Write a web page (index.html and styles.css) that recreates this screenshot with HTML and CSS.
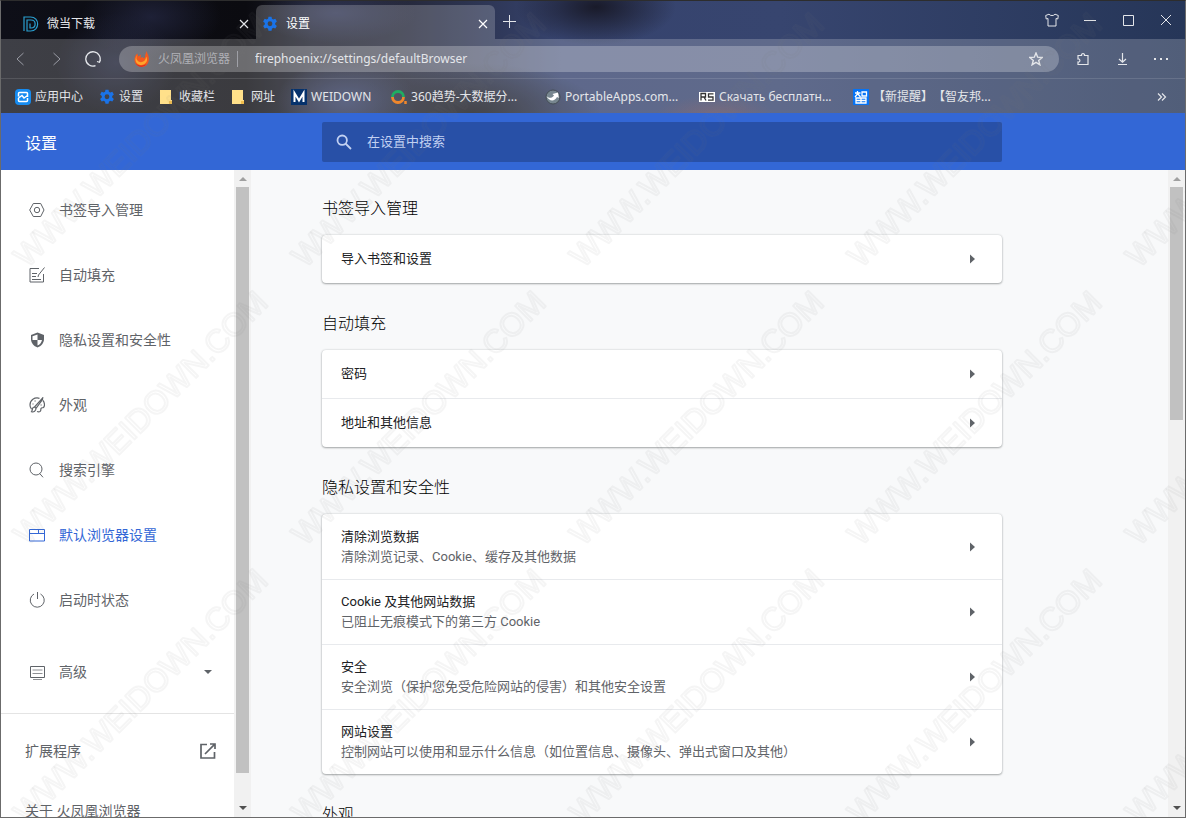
FILE: index.html
```
<!DOCTYPE html>
<html lang="zh-CN">
<head>
<meta charset="utf-8">
<meta name="viewport" content="width=device-width, initial-scale=1">
<title>设置</title>
<link rel="stylesheet" href="styles.css">
</head>
<body>
<svg class="defs" aria-hidden="true">
  <symbol id="gear" viewBox="0 0 24 24"><path fill-rule="evenodd" d="M9.7 1h4.6l.6 3.2 2 1.2 3.1-1.1 2.3 4-2.5 2.1v2.4l2.5 2.1-2.3 4-3.1-1.1-2 1.2-.6 3.2H9.700l-.6-3.200-2-1.200L4 18.900l-2.300-4 2.500-2.100v-2.400L1.700 8.300l2.300-4 3.100 1.100 2-1.200zM12 8a3.600 3.600 0 1 0 0 7.200A3.600 3.600 0 0 0 12 8z"/></symbol>
  <symbol id="cross" viewBox="0 0 12 12"><path d="M2 2l8 8m0-8l-8 8" fill="none" stroke="currentColor" stroke-width="1.200"/></symbol>
  <symbol id="folder" viewBox="0 0 16 16"><path d="M1 1h11v10h1v4H1z" fill="#ffe08a"/><path d="M10 12h3v3h-3z" fill="#f0bd4e"/></symbol>
  <symbol id="arrow" viewBox="0 0 6 10"><path d="M0 .5L5 5 0 9.500z"/></symbol>
</svg>
<div class="window">
  <header class="chrome">
    <div class="tabs">
      <div class="tab">
        <svg class="i16" viewBox="0 0 16 16" fill="none" stroke="#2a9fd0" stroke-width="1.200"><path d="M1 15V1h6.500c9.500 0 9.500 14 0 14H4V4h4c5.500 0 5.500 8 0 8H7V7.500"/></svg>
        <span class="tab-title">微当下载</span>
        <button class="icon-btn" aria-label="关闭标签页"><svg class="i12"><use href="#cross"/></svg></button>
      </div>
      <div class="tab tab-active">
        <svg class="i16 blue"><use href="#gear"/></svg>
        <span class="tab-title">设置</span>
        <button class="icon-btn" aria-label="关闭标签页"><svg class="i12"><use href="#cross"/></svg></button>
      </div>
      <button class="icon-btn new-tab" aria-label="新标签页"><svg class="i14" viewBox="0 0 14 14"><path d="M7.500 1v13M1 7.500h13" stroke="currentColor"/></svg></button>
      <div class="win-controls">
        <button class="icon-btn" aria-label="皮肤"><svg class="i14" viewBox="0 0 14 14" fill="none" stroke="currentColor"><path d="M.7 2.500L4 1.200c1 1.800 5 1.800 6 0l3.300 1.300-.5 3.500-1.800-.5v7.500H3V5.500L1.200 6z"/></svg></button>
        <button class="icon-btn" aria-label="最小化"><svg class="i12" viewBox="0 0 12 12"><path d="M0 6.500h12" stroke="currentColor"/></svg></button>
        <button class="icon-btn" aria-label="最大化"><svg class="i12" viewBox="0 0 12 12"><path d="M1.500 1.500h10v10h-10z" fill="none" stroke="currentColor"/></svg></button>
        <button class="icon-btn" aria-label="关闭"><svg class="i12" viewBox="0 0 12 12"><path d="M1 1l10 10m0-10L1 11" stroke="currentColor"/></svg></button>
      </div>
    </div>
    <div class="toolbar">
      <div class="nav-buttons">
        <button class="icon-btn dim" aria-label="后退"><svg class="i16" viewBox="0 0 16 16" fill="none" stroke="currentColor"><path d="M10.500 2L4 8l6.500 6"/></svg></button>
        <button class="icon-btn dim" aria-label="前进"><svg class="i16" viewBox="0 0 16 16" fill="none" stroke="currentColor"><path d="M4.500 2L11 8l-6.500 6"/></svg></button>
        <button class="icon-btn" aria-label="刷新"><svg class="i16" viewBox="0 0 16 16" fill="none" stroke="currentColor" stroke-width="1.300"><path d="M10.500 14.700A7.200 7.200 0 1 1 14.600 10.800M15.500 8.800l-1 2.500-2.500-.8"/></svg></button>
      </div>
      <div class="address">
        <svg class="i16" viewBox="0 0 16 16"><path d="M13 0c-.5 2 1.500 3.500 1.800 6.500C15.500 12 12 16 8 16c-4.500 0-7.500-3.300-7.500-7.500C.5 6 1.500 3.500 3.500 2.500c0 1.500.5 2.500 1 3L7 3.500 6.500 7l2-1L10 7.500c1.800-1.500.5-4 3-7.500z" fill="#f4581e"/><path d="M3.500 4C2 6 2 8 3.500 9.500 5.500 12 9 11.500 11 9c.7-1 1-2 1-3.500 2 3 1 6-1.500 7.500C6.500 15.500 1.500 13 1.500 8.500 1.500 6.500 2.300 5 3.500 4z" fill="#ffa52b"/><path d="M1.500 12c2.500 3 7 3.800 11 1-2.500 3.500-8.500 4-11-1z" fill="#d7261e"/></svg>
        <label class="site" for="url">火凤凰浏览器</label>
        <input class="url" id="url" type="text" value="firephoenix://settings/defaultBrowser">
        <button class="icon-btn" aria-label="收藏"><svg class="i14" viewBox="0 0 14 14" fill="none" stroke="currentColor" stroke-width="1.400"><path d="M7 1l1.700 4.200 4.500.3-3.500 2.900 1.200 4.400L7 10.400l-3.900 2.400 1.200-4.400L.8 5.500l4.500-.3z"/></svg></button>
      </div>
      <div class="tools">
        <button class="icon-btn" aria-label="扩展"><svg class="i14" viewBox="0 0 14 14" fill="none" stroke="currentColor" stroke-width="1.200"><path d="M2 3.500h3.500c-.8-2.500 3.800-2.500 3 0h3.500v9H2V10c2.500.5 2.500-3.500 0-3z"/></svg></button>
        <button class="icon-btn" aria-label="下载"><svg class="i14" viewBox="0 0 14 14" fill="none" stroke="currentColor" stroke-width="1.200"><path d="M7.500 1v9M4 7l3.500 3.200L11 7M3 12.500h9"/></svg></button>
        <button class="icon-btn" aria-label="菜单"><svg class="i16" viewBox="0 0 16 16" fill="currentColor"><path d="M1 7h2v2H1zM7 7h2v2H7zM13 7h2v2h-2z"/></svg></button>
      </div>
    </div>
    <nav class="bookmarks" aria-label="书签栏">
      <a href="#"><svg class="i16" viewBox="0 0 16 16"><rect width="16" height="16" rx="4" fill="#168bf0"/><path d="M3.500 7.500V4.500q0-1 1-1h7q1 0 1 1V8M3.500 9v2.500q0 1 1 1h7q1 0 1-1V9M3.500 9L7 6.500l2 2.500 3.500-2.500" fill="none" stroke="#fff" stroke-width="1.500"/></svg>应用中心</a>
      <a href="#"><svg class="i16 blue"><use href="#gear"/></svg>设置</a>
      <a href="#"><svg class="i16"><use href="#folder"/></svg>收藏栏</a>
      <a href="#"><svg class="i16"><use href="#folder"/></svg>网址</a>
      <a class="mid" href="#"><svg class="i16" viewBox="0 0 16 16"><path d="M0 0h16v16H0z" fill="#06326c"/><path d="M3.500 13V4L8 11.500 12.500 4v9" fill="none" stroke="#fff" stroke-width="2"/></svg>WEIDOWN</a>
      <a class="wide" href="#"><svg class="i16" viewBox="0 0 16 16" fill="none" stroke-width="2.800"><path d="M1.500 8a5.500 5.500 0 0 1 11 0" stroke="#1fae62"/><path d="M1.500 8a5.500 5.500 0 0 0 11 0" stroke="#f0872c"/><path d="M14.500 12v3" stroke="#f0872c" stroke-width="2.500"/></svg>360趋势-大数据分...</a>
      <a class="wide" href="#"><svg class="i16" viewBox="0 0 16 16"><circle cx="8" cy="8" r="7" fill="#77868f" stroke="#444d55"/><path d="M1.500 7c2 2.500 5.500 2.500 7.500-.5L7.500 5 13 3.500l.8 5.500L12 8c-2.500 5-8 4.500-10.500-1z" fill="#fff"/></svg>PortableApps.com...</a>
      <a class="wide" href="#"><svg class="i16" viewBox="0 0 16 16"><path d="M0 3h16v10H0z" fill="#fff"/><path d="M2 11.500v-7h4.500V8H2.500M5 8l2 3.500M14.500 4.800H9.500V8H14v3.200H9" fill="none" stroke="#333" stroke-width="1.300"/></svg>Скачать бесплатн...</a>
      <a class="wide" href="#"><svg class="i16" viewBox="0 0 16 16"><path d="M0 0h16v16H0z" fill="#0673f5"/><path d="M2 4h5.500M4.500 2v3L2 8M5 5l2.500 3M9 3h4.500v4H9zM3 9h10v5H3zM3 11.500h10M8 9v5" fill="none" stroke="#fff" stroke-width="1.300"/></svg>【新提醒】【智友邦...</a>
      <button class="icon-btn more" aria-label="更多书签"><svg class="i12" viewBox="0 0 12 12" fill="none" stroke="currentColor" stroke-width="1.200"><path d="M2 2.500L5.500 6 2 9.500M6 2.500L9.500 6 6 9.500"/></svg></button>
    </nav>
  </header>

  <div class="app-bar">
    <h1>设置</h1>
    <label class="search">
      <svg class="i16" viewBox="0 0 16 16" fill="none" stroke="currentColor" stroke-width="1.800"><circle cx="6.200" cy="6.200" r="4.700"/><path d="M9.500 9.500l5.500 5.500"/></svg>
      <input type="search" placeholder="在设置中搜索" aria-label="在设置中搜索">
    </label>
  </div>

  <div class="body">
    <nav class="sidebar" aria-label="设置">
      <a href="#"><svg class="i16" viewBox="0 0 16 16" fill="none" stroke="currentColor"><path d="M4.300 1.500h7.400L15 8l-3.300 6.500H4.300L.7 8z"/><circle cx="8" cy="8" r="2.700"/></svg>书签导入管理</a>
      <a href="#"><svg class="i16" viewBox="0 0 16 16" fill="none" stroke="currentColor"><path d="M10 1.500H1v13.500h13.500V7M15.500.5L9.500 8l-.5 2M3 6.500h5M3 9.500h4M3 12.500h9"/></svg>自动填充</a>
      <a href="#"><svg class="i16" viewBox="0 0 16 16"><path d="M8.500.5l6.500 2.600v4c0 4-2.700 7.200-6.500 8.400C4.700 14.300 2 11.100 2 7.100v-4z" fill="currentColor"/><path d="M8.500 2.500V8H13c-.5 2.600-2.200 4.700-4.500 5.600V8H3.500V4.300z" fill="#fff"/></svg>隐私设置和安全性</a>
      <a href="#"><svg class="i16" viewBox="0 0 16 16" fill="none" stroke="currentColor" stroke-width="1.200"><path d="M10.500 1.300C5.500 0 1 3 1 8c0 1.500.5 3 1.500 4M14 3.500c1.700 2 2 5.500.5 7-1 .5-2 0-2.500 1s.5 2-1 3c-1 .5-2 .3-3 0M13.700.8L5.500 10l1.500 1.300L13.500 2.500zM5.500 10c-3 0-1.500 3-3 4.800 2.300.7 4.500-.8 4.500-3.500"/><path d="M3.500 7h1M5.500 4h1.200M11.500 8h1.200"/></svg>外观</a>
      <a href="#"><svg class="i16" viewBox="0 0 16 16" fill="none" stroke="currentColor"><circle cx="7" cy="7" r="6"/><path d="M10.700 11.500L14 15.300"/></svg>搜索引擎</a>
      <a class="current" href="#" aria-current="page"><svg class="i16" viewBox="0 0 16 16" fill="none" stroke="currentColor"><path d="M.5 2.500h15v11.500H.5zM.5 6.500h15M9.500 2.500v4"/></svg>默认浏览器设置</a>
      <a href="#"><svg class="i16" viewBox="0 0 16 16" fill="none" stroke="currentColor"><path d="M5 2A7 7 0 1 0 11.500 2M8.500 0v7"/></svg>启动时状态</a>
      <button class="advanced" aria-expanded="false"><svg class="i16" viewBox="0 0 16 16" fill="none" stroke="currentColor"><path d="M1.500 2.500h14v11h-14z"/><path d="M3.500 6h10M3.500 9.500h10M4 15.500h9" opacity=".7"/></svg><span>高级</span><svg class="caret" viewBox="0 0 8 4"><path d="M0 0h8L4 4z"/></svg></button>
      <hr>
      <a class="plain" href="#"><span>扩展程序</span><svg class="i16" viewBox="0 0 16 16" fill="none" stroke="currentColor" stroke-width="1.700"><path d="M7 1.500H1v13.500h13.500V9M10 1h5v5M14.800 1.200L5 11"/></svg></a>
      <a class="plain" href="#">关于 火凤凰浏览器</a>
    </nav>
    <div class="scrollbar" aria-hidden="true"><svg class="caret up" viewBox="0 0 8 4"><path d="M0 4h8L4 0z"/></svg><div class="track"><div class="thumb thumb-side"></div></div><svg class="caret" viewBox="0 0 8 4"><path d="M0 0h8L4 4z"/></svg></div>

    <main class="content">
      <section>
        <h2>书签导入管理</h2>
        <div class="card">
          <button class="row"><span>导入书签和设置</span><svg class="arrow"><use href="#arrow"/></svg></button>
        </div>
      </section>
      <section>
        <h2>自动填充</h2>
        <div class="card">
          <button class="row"><span>密码</span><svg class="arrow"><use href="#arrow"/></svg></button>
          <button class="row"><span>地址和其他信息</span><svg class="arrow"><use href="#arrow"/></svg></button>
        </div>
      </section>
      <section>
        <h2>隐私设置和安全性</h2>
        <div class="card">
          <button class="row tall"><span>清除浏览数据<small>清除浏览记录、Cookie、缓存及其他数据</small></span><svg class="arrow"><use href="#arrow"/></svg></button>
          <button class="row tall"><span>Cookie 及其他网站数据<small>已阻止无痕模式下的第三方 Cookie</small></span><svg class="arrow"><use href="#arrow"/></svg></button>
          <button class="row tall"><span>安全<small>安全浏览（保护您免受危险网站的侵害）和其他安全设置</small></span><svg class="arrow"><use href="#arrow"/></svg></button>
          <button class="row tall"><span>网站设置<small>控制网站可以使用和显示什么信息（如位置信息、摄像头、弹出式窗口及其他）</small></span><svg class="arrow"><use href="#arrow"/></svg></button>
        </div>
      </section>
      <section>
        <h2>外观</h2>
      </section>
    </main>
    <div class="scrollbar" aria-hidden="true"><svg class="caret up" viewBox="0 0 8 4"><path d="M0 4h8L4 0z"/></svg><div class="track"><div class="thumb thumb-main"></div></div><svg class="caret" viewBox="0 0 8 4"><path d="M0 0h8L4 4z"/></svg></div>
  </div>
  <svg class="watermark" aria-hidden="true">
    <defs><pattern id="mark" y="2" width="278" height="278" patternUnits="userSpaceOnUse"><text transform="translate(26 266) rotate(-45)">WWW.WEIDOWN.COM</text></pattern></defs>
    <rect width="100%" height="100%" fill="url(#mark)"/>
  </svg>
</div>
</body>
</html>
```
FILE: styles.css
```
* { box-sizing: border-box; }

body {
  margin: 0;
  font: 13px/20px Roboto, "Noto Sans CJK SC", sans-serif;
  color: #202124;
}

.defs { position: absolute; width: 0; height: 0; }
svg { flex: none; display: block; }
a { color: inherit; text-decoration: none; }
button, input { font: inherit; color: inherit; border: 0; background: none; padding: 0; }

.i12 { width: 12px; height: 12px; }
.i14 { width: 14px; height: 14px; }
.i16 { width: 16px; height: 16px; }
.blue { fill: #1a73e8; }

.window {
  position: relative;
  display: flex;
  flex-direction: column;
  height: 100vh;
  overflow: hidden;
  border: 1px solid #6b6b6b;
  border-top-color: #2d2d2d;
}

/* Browser frame */
.chrome {
  font: 12px/16px "Noto Sans", "Noto Sans CJK SC", sans-serif;
  text-spacing-trim: space-all;
  color: #e4e6ea;
  background:
    radial-gradient(ellipse 70px 40px at 150px 16px, rgba(42, 46, 78, .6), transparent),
    radial-gradient(ellipse 60px 50px at 115px 62px, rgba(34, 38, 62, .8), transparent),
    radial-gradient(ellipse 80px 30px at 335px 12px, rgba(52, 58, 92, .8), transparent),
    radial-gradient(ellipse 70px 40px at 345px 100px, rgba(56, 66, 106, .9), transparent),
    radial-gradient(ellipse 80px 38px at 595px 6px, rgba(22, 22, 34, .9), transparent),
    radial-gradient(ellipse 130px 50px at 470px 112px, rgba(20, 20, 24, .9), transparent),
    radial-gradient(ellipse 60px 20px at 715px 114px, rgba(110, 70, 80, .6), transparent),
    linear-gradient(90deg, #0e0f18 0, #0b0b10 245px, #1c1e2c 310px, #25283a 400px, #36436e 560px, #37456f 780px, #263658 100%);
}

.icon-btn {
  display: flex;
  align-items: center;
  justify-content: center;
  width: 24px;
  height: 24px;
}
.dim { color: #9a9ca5; }

.tabs { display: flex; height: 38px; padding-top: 4px; }
.tab {
  display: flex;
  align-items: center;
  gap: 8px;
  width: 255px;
  padding: 3px 0 0 22px;
}
.tab-active {
  width: 239px;
  padding-left: 6px;
  color: #fff;
  background: rgba(255, 255, 255, .2);
  border-radius: 6px 6px 0 0;
}
.tab-title { flex: 1; }
.new-tab { margin: 4px 0 0 2px; }
.win-controls { display: flex; gap: 14px; margin: 3px 7px 0 auto; }

.toolbar, .bookmarks {
  display: flex;
  align-items: center;
  background: rgba(255, 255, 255, .2);
}
.toolbar { height: 40px; border-bottom: 1px solid rgba(255, 255, 255, .12); }
.nav-buttons { display: flex; gap: 12px; padding: 0 14px 0 8px; }
.address {
  display: flex;
  align-items: center;
  flex: 1;
  height: 26px;
  padding: 0 11px 0 15px;
  border-radius: 13px;
  background: rgba(255, 255, 255, .25);
}
.site {
  padding: 0 7px 0 8px;
  color: #b0b1b7;
  border-right: 1px solid #a0a1a8;
}
.url { flex: 1; min-width: 0; padding-left: 17px; }
.tools { display: flex; gap: 15px; padding: 0 12px; }

.bookmarks { height: 34px; padding: 1px 11px 0 14px; gap: 16px; }
.bookmarks a { display: flex; align-items: center; gap: 4px; white-space: nowrap; }
.bookmarks .mid { min-width: 84px; }
.bookmarks .wide { width: 138px; }
.more { margin-left: auto; }

/* Settings header */
.app-bar {
  display: flex;
  align-items: center;
  height: 57px;
  color: #fff;
  background: #3367d6;
}
.app-bar h1 {
  flex: none;
  width: 321px;
  margin: 0;
  padding: 4px 0 0 24px;
  font-size: 16px;
  font-weight: 400;
}
.search {
  display: flex;
  align-items: center;
  gap: 15px;
  flex: 0 1 680px;
  height: 40px;
  padding: 0 14px;
  border-radius: 2px;
  color: #c2d1f2;
  background: #2850a7;
}
.search input { flex: 1; min-width: 0; outline: 0; }
.search input::placeholder { color: #c2d1f2; opacity: 1; }

.body { display: flex; flex: 1; min-height: 0; background: #f8f9fa; }

/* Sidebar */
.sidebar {
  flex: none;
  width: 233px;
  padding-top: 7px;
  overflow: hidden;
  font-size: 14px;
  color: #5f6368;
  background: #fff;
}
.sidebar a, .advanced {
  display: flex;
  align-items: center;
  gap: 14px;
  width: 100%;
  height: 65px;
  padding: 0 22px 0 28px;
}
.sidebar .current { color: #3367d6; }
.advanced { margin-top: 7px; }
.advanced .caret { margin-left: auto; }
.sidebar hr { margin: 9px 0 7px; border: 0; border-top: 1px solid #e4e4e4; }
.sidebar .plain { justify-content: space-between; height: 60px; padding: 0 18px 0 24px; }
.caret { width: 8px; height: 4px; fill: currentColor; }

.scrollbar {
  display: flex;
  flex-direction: column;
  align-items: center;
  flex: none;
  width: 17px;
  padding: 7px 0;
  color: #505050;
  background: #f1f1f1;
}
.up { color: #a0a0a0; }
.track { flex: 1; width: 13px; margin: 6px 0; }
.thumb { background: #c1c1c1; }
.thumb-side { height: calc(100% - 27px); }
.thumb-main { height: 38%; }

/* Settings cards */
.content { flex: 1; min-width: 0; padding: 0 71px; overflow: hidden; }
.content section { max-width: 680px; padding-top: 29px; }
.content section:first-child { padding-top: 27px; }
.content h2 { margin: 0 0 14px; font-size: 16px; line-height: 24px; font-weight: 300; color: #000; }
.card {
  overflow: hidden;
  border-radius: 4px;
  background: #fff;
  box-shadow: 0 1px 2px rgba(60, 64, 67, .4), 0 0 2px rgba(60, 64, 67, .25);
}
.row {
  display: flex;
  align-items: center;
  justify-content: space-between;
  width: 100%;
  height: 48px;
  padding: 0 26px 0 19px;
  text-align: left;
}
.row + .row { height: 49px; border-top: 1px solid #e8eaed; }
.row.tall, .row.tall + .row.tall { height: 65px; }
.row small { display: block; font-size: 13px; color: #5f6368; }
.arrow { width: 6px; height: 10px; fill: #5f6368; }

.watermark {
  position: absolute;
  inset: 0;
  width: 100%;
  height: 100%;
  pointer-events: none;
}
.watermark text {
  font: 32px "Liberation Sans", sans-serif;
  fill: none;
  stroke: rgba(120, 120, 120, .07);
  stroke-width: 2;
  stroke-linejoin: round;
}
```
